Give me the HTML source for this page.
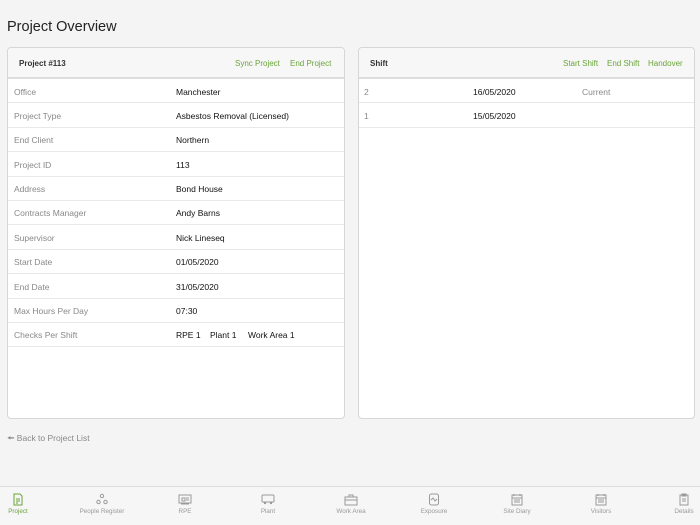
<!DOCTYPE html>
<html><head><meta charset="utf-8"><style>
*{box-sizing:border-box;margin:0;padding:0}
body{width:700px;height:525px;background:#f4f4f4;font-family:"Liberation Sans",sans-serif;position:relative;overflow:hidden;color:#111}
h1{position:absolute;left:7px;top:19px;font-size:14.5px;font-weight:normal;color:#222}
.card{position:absolute;top:47px;height:372px;background:#fff;border:1px solid #d6d6d6;border-radius:4px;overflow:hidden}
.hd{height:31px;background:#f7f7f7;border-bottom:2px solid #ddd;position:relative;font-size:8px}
.hd b{position:absolute;left:11px;top:11px;color:#333}
.hd .a{position:absolute;top:11px;color:#6aa43a}
.row{height:24.4px;border-bottom:1px solid #e8e8e8;position:relative;font-size:8.5px}
.row span{position:absolute;top:7.5px}
.l{color:#888}
.v{color:#111}
.back{position:absolute;left:7px;top:433px;font-size:8.5px;color:#888}
.tab{position:absolute;top:486px;left:0;width:700px;height:39px;border-top:1px solid #ddd;background:#f6f6f6}
.t{position:absolute;top:6px;width:80px;margin-left:-40px;text-align:center;font-size:6.3px;color:#999}
.t svg{display:block;margin:0 auto 2px}
</style></head><body>
<h1>Project Overview</h1>
<div class="card" style="left:7px;width:338px">
<div class="hd"><b>Project #113</b><span class="a" style="left:227px">Sync Project</span><span class="a" style="left:282px">End Project</span></div>
<div class="row"><span class="l" style="left:6px">Office</span><span class="v" style="left:168px">Manchester</span></div>
<div class="row"><span class="l" style="left:6px">Project Type</span><span class="v" style="left:168px">Asbestos Removal (Licensed)</span></div>
<div class="row"><span class="l" style="left:6px">End Client</span><span class="v" style="left:168px">Northern</span></div>
<div class="row"><span class="l" style="left:6px">Project ID</span><span class="v" style="left:168px">113</span></div>
<div class="row"><span class="l" style="left:6px">Address</span><span class="v" style="left:168px">Bond House</span></div>
<div class="row"><span class="l" style="left:6px">Contracts Manager</span><span class="v" style="left:168px">Andy Barns</span></div>
<div class="row"><span class="l" style="left:6px">Supervisor</span><span class="v" style="left:168px">Nick Lineseq</span></div>
<div class="row"><span class="l" style="left:6px">Start Date</span><span class="v" style="left:168px">01/05/2020</span></div>
<div class="row"><span class="l" style="left:6px">End Date</span><span class="v" style="left:168px">31/05/2020</span></div>
<div class="row"><span class="l" style="left:6px">Max Hours Per Day</span><span class="v" style="left:168px">07:30</span></div>
<div class="row"><span class="l" style="left:6px">Checks Per Shift</span><span class="v" style="left:168px">RPE 1</span><span class="v" style="left:202px">Plant 1</span><span class="v" style="left:240px">Work Area 1</span></div>
</div>
<div class="card" style="left:358px;width:337px">
<div class="hd"><b>Shift</b><span class="a" style="left:204px">Start Shift</span><span class="a" style="left:248px">End Shift</span><span class="a" style="left:289px">Handover</span></div>
<div class="row"><span class="l" style="left:5px">2</span><span class="v" style="left:114px">16/05/2020</span><span class="l" style="left:223px">Current</span></div>
<div class="row"><span class="l" style="left:5px">1</span><span class="v" style="left:114px">15/05/2020</span></div>
</div>
<div class="back">&#129048; Back to Project List</div>
<div class="tab">
<div class="t" style="left:18px;color:#6aa43a"><svg width="12" height="13" viewBox="0 0 12 13"><path d="M2 1h6l2 2v9H2z" fill="none" stroke="#6aa43a"/><path d="M4 6h4M4 8h4M4 10h2" stroke="#6aa43a"/></svg>Project</div>
<div class="t" style="left:102px"><svg width="14" height="13" viewBox="0 0 14 13"><circle cx="7" cy="3" r="1.7" fill="none" stroke="#999"/><circle cx="3.5" cy="9" r="1.7" fill="none" stroke="#999"/><circle cx="10.5" cy="9" r="1.7" fill="none" stroke="#999"/></svg>People Register</div>
<div class="t" style="left:185px"><svg width="14" height="13" viewBox="0 0 14 13"><rect x="1" y="2" width="12" height="8" fill="none" stroke="#999"/><path d="M3 11h8M4 5h3v3H4zM8 5h3M8 7h3" stroke="#999" fill="none"/></svg>RPE</div>
<div class="t" style="left:268px"><svg width="14" height="13" viewBox="0 0 14 13"><rect x="1" y="2" width="12" height="7" rx="1" fill="none" stroke="#999"/><circle cx="4" cy="10" r="1.2" fill="#999"/><circle cx="10" cy="10" r="1.2" fill="#999"/></svg>Plant</div>
<div class="t" style="left:351px"><svg width="14" height="13" viewBox="0 0 14 13"><rect x="1" y="4" width="12" height="8" fill="none" stroke="#999"/><path d="M5 4V2h4v2M1 7h12" stroke="#999" fill="none"/></svg>Work Area</div>
<div class="t" style="left:434px"><svg width="12" height="13" viewBox="0 0 12 13"><rect x="1.5" y="1" width="9" height="11" rx="2" fill="none" stroke="#999"/><path d="M3 7l2-2 2 3 2-2" stroke="#999" fill="none"/></svg>Exposure</div>
<div class="t" style="left:517px"><svg width="12" height="13" viewBox="0 0 12 13"><rect x="1" y="2" width="10" height="10" fill="none" stroke="#999"/><path d="M1 5h10M3 1v2M9 1v2M3 7h6M3 9h6" stroke="#999" fill="none"/></svg>Site Diary</div>
<div class="t" style="left:601px"><svg width="12" height="13" viewBox="0 0 12 13"><rect x="1" y="2" width="10" height="10" fill="none" stroke="#999"/><path d="M1 5h10M3 1v2M9 1v2M3 7h6M3 9h6" stroke="#999" fill="none"/></svg>Visitors</div>
<div class="t" style="left:684px"><svg width="12" height="13" viewBox="0 0 12 13"><rect x="2" y="2" width="8" height="10" fill="none" stroke="#999"/><path d="M4 1h4v2H4zM4 6h4M4 8h4" stroke="#999" fill="none"/></svg>Details</div>
</div>
</body></html>
